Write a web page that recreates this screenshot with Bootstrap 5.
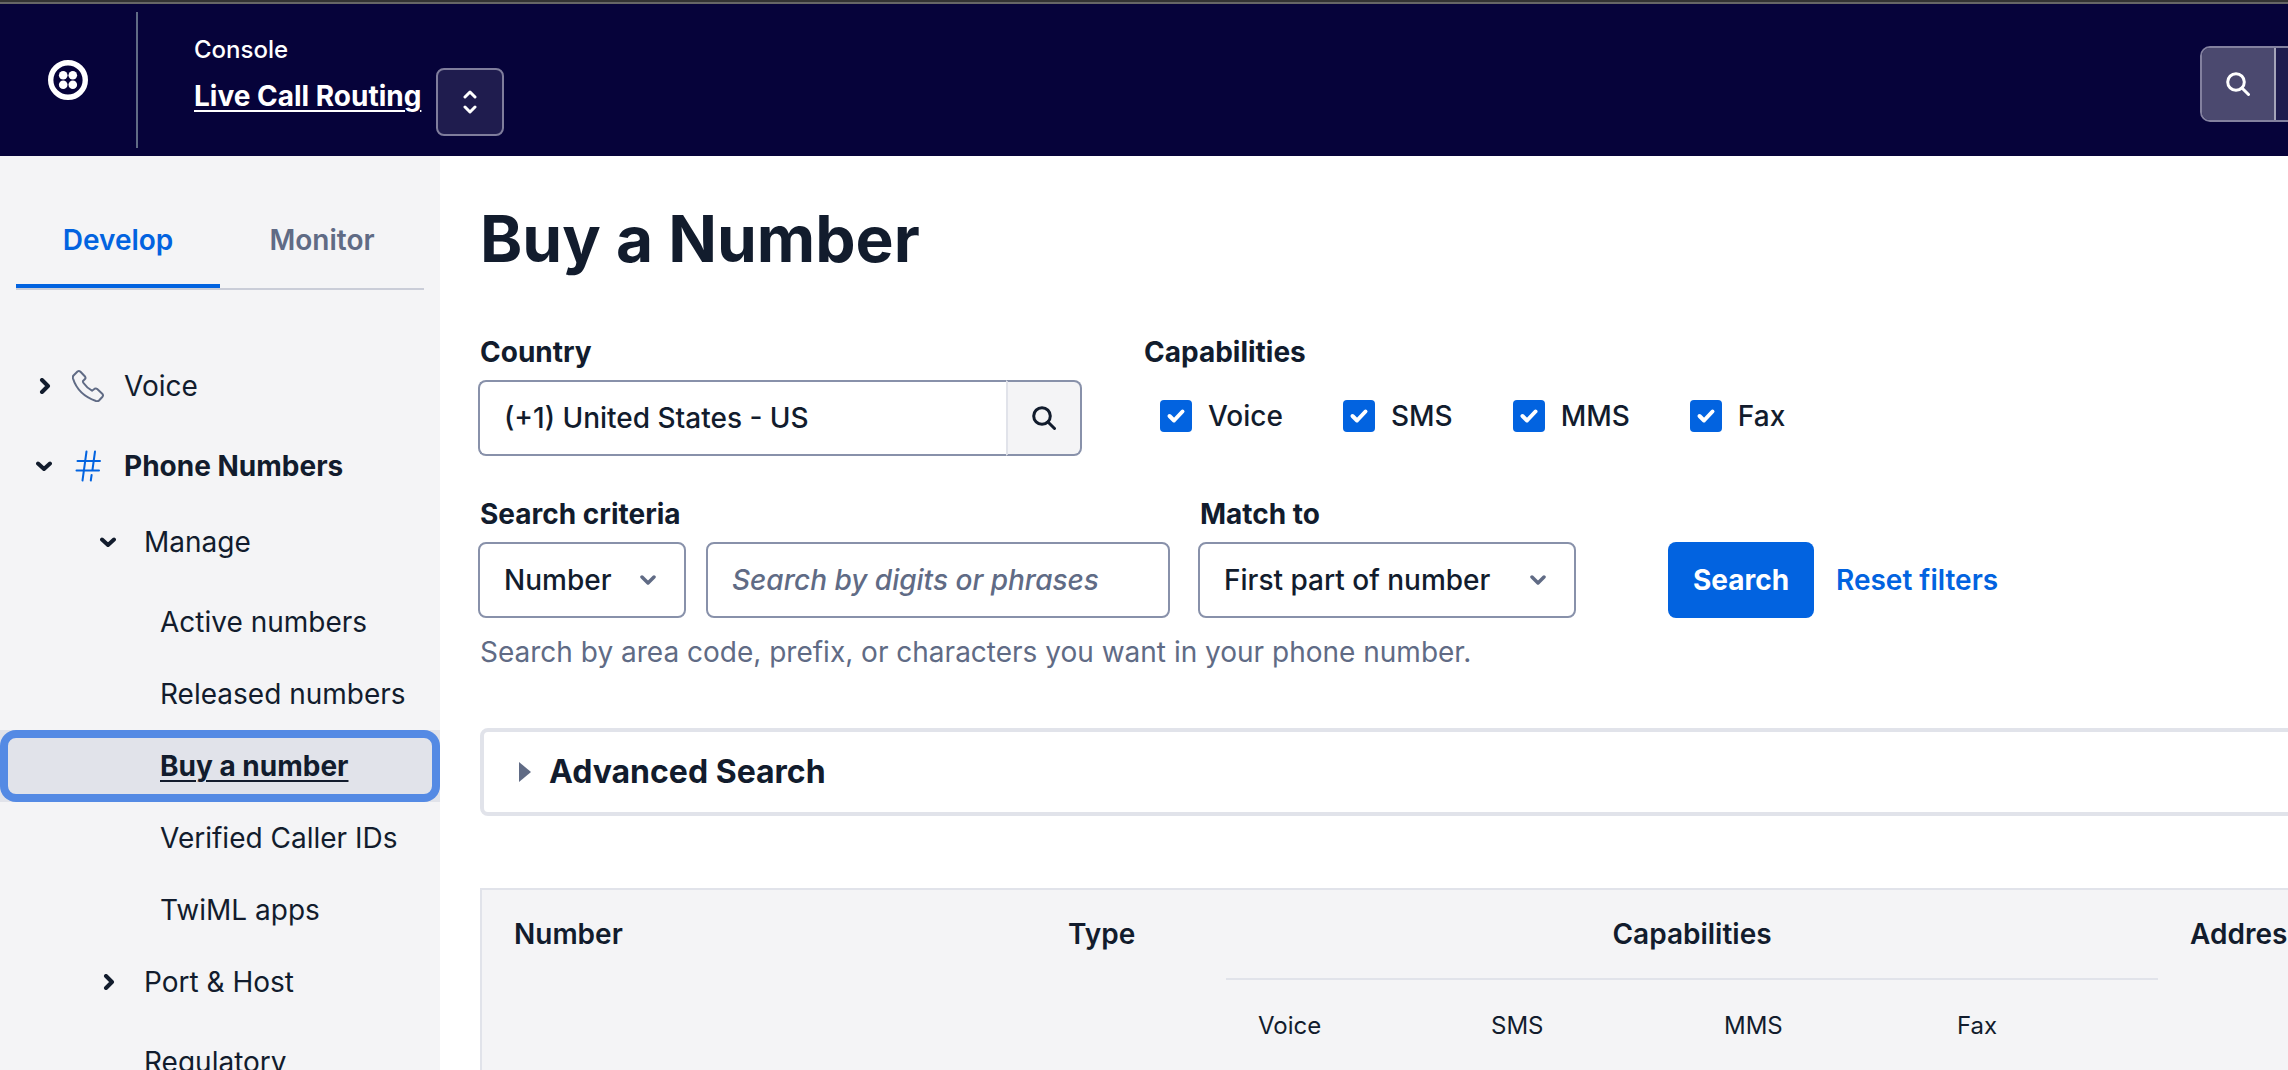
<!DOCTYPE html>
<html lang="en">
<head>
<meta charset="utf-8">
<meta name="viewport" content="width=device-width, initial-scale=1">
<title>Buy a Number</title>
<link href="https://cdn.jsdelivr.net/npm/bootstrap@5.3.0/dist/css/bootstrap.min.css" rel="stylesheet">
<style>
  :root { --ink: #121c2d; --muted: #606b85; --line: #e1e3ea; --field: #8891aa; --blue: #0263e0; --panel: #f4f4f6; --navy: #06033a; }
  body { font-family: Inter, "Liberation Sans", sans-serif; font-size: 28px; line-height: 40px; color: var(--ink); }
  svg { display: block; flex: none; }

  .topbar { background: var(--navy); border-top: 2px solid #666; height: 154px; }
  .top-edge { height: 2px; background: #333; }
  .brand-cell { width: 138px; border-right: 2px solid #606b85; margin: 8px 0; padding-left: 48px; }
  .account { padding: 30px 0 0 56px; }
  .console-label { font-size: 24px; line-height: 32px; font-weight: 500; margin-bottom: 10px; }
  .account-link { text-decoration-thickness: 2px; text-underline-offset: 4px; }
  .account-link:hover { color: #fff; }
  .switch-btn { width: 68px; height: 68px; border: 2px solid #7f7d9c; border-radius: 8px; background: #1f1c4e; margin: 64px 0 0 15px; padding: 0; }
  .top-search { flex: 0 0 480px; height: 76px; margin: 42px -392px 0 auto; border: 2px solid #83819f; border-radius: 10px; overflow: hidden; background: #1f1c4e; }
  .top-search button { flex: 0 0 74px; border: 0; border-right: 2px solid #a5a4b8; background: #4b496f; padding: 0 0 0 24px; }
  .top-search input { background: transparent; border: 0; }

  .side { flex: 0 0 440px; background: var(--panel); padding-top: 44px; }
  .side-tabs { margin: 0 16px 56px; border-bottom: 2px solid #cacdd8; }
  .side-tabs .nav-link { padding: 20px 0 24px; border-bottom: 4px solid transparent; border-radius: 0; font-weight: 600; color: var(--muted); }
  .side-tabs .nav-link.active { color: var(--blue); border-color: var(--blue); }
  .tree a { display: flex; align-items: center; color: var(--ink); text-decoration: none; padding: 16px 0; }
  .tree .top-item { padding: 20px 0 20px 36px; }
  .tree .mid-item { padding-left: 100px; }
  .tree .leaf { padding-left: 160px; }
  .tree .no-arrow { padding-left: 144px; }
  .top-item .item-icon { margin: 0 20px 0 20px; }
  .mid-item svg { margin-right: 28px; }
  .chosen { background: var(--line); }
  .chosen a { box-shadow: inset 0 0 0 8px #548ae4; border-radius: 16px; font-weight: 700; text-decoration: underline; text-decoration-thickness: 2px; text-underline-offset: 4px; }

  .work { padding: 43px 0 0 40px; }
  .work h1 { font-size: 64px; line-height: 80px; font-weight: 700; margin-bottom: 53px; }
  .field-title { display: block; float: none; font-size: 28px; line-height: 40px; font-weight: 700; margin: 0 0 8px; }
  label.field-title { padding-left: 2px; }
  .form-control, .form-select { height: 76px; font-size: 28px; line-height: 40px; font-weight: 500; color: var(--ink); border: 2px solid var(--field); border-radius: 8px; padding: 0 24px; background-color: #fff; }
  .form-control::placeholder { color: var(--muted); font-style: italic; opacity: 1; }
  .form-select { background-image: url("data:image/svg+xml,%3Csvg xmlns='http://www.w3.org/2000/svg' viewBox='0 0 16 10'%3E%3Cpath d='M2 2l6 6 6-6' fill='none' stroke='%23606b85' stroke-width='3.5' stroke-linecap='round' stroke-linejoin='round'/%3E%3C/svg%3E"); background-size: 16px 10px; background-position: right 28px center; }
  .form-row { margin-left: -2px; }
  .country { width: 604px; }
  .country .form-control { border-right: 0; }
  .country .btn { width: 76px; border: 2px solid var(--field); border-left: 2px solid var(--line); border-radius: 0 8px 8px 0; background: var(--panel); padding: 0 0 0 24px; }
  .capabilities { margin-left: 62px; }
  .checks { gap: 60px; padding-left: 16px; margin-top: 16px; }
  .checks .form-check-input { width: 32px; height: 32px; margin: 0 16px 0 0; border: 0; border-radius: 4px; }
  .checks .form-check-input:checked { background-color: var(--blue); background-size: 32px 32px; background-image: url("data:image/svg+xml,%3Csvg xmlns='http://www.w3.org/2000/svg' viewBox='0 0 32 32'%3E%3Cpath d='M9.500 16l4.500 4.500 8.500-9' fill='none' stroke='%23fff' stroke-width='4' stroke-linecap='round' stroke-linejoin='round'/%3E%3C/svg%3E"); }
  .checks label { font-weight: 500; }
  .criteria-row { margin-top: 38px; }
  .criteria { width: 208px; }
  .digits { width: 464px; margin-left: 20px; }
  .match-group { margin-left: 28px; }
  .match { width: 378px; }
  .search-btn { height: 76px; width: 146px; margin-left: 92px; background: var(--blue); border: 0; border-radius: 8px; font-size: 28px; font-weight: 700; padding: 0; }
  .reset-link { color: var(--blue); font-weight: 600; text-decoration: none; line-height: 76px; margin-left: 22px; }
  .hint { color: var(--muted); margin: 14px 0 56px; }
  .wide { width: calc(100% + 400px); }
  .advanced { border: 4px solid var(--line); border-radius: 8px; margin-bottom: 72px; }
  .advanced summary { display: flex; align-items: center; font-size: 32px; font-weight: 700; padding: 20px 35px; }
  .advanced summary svg { margin-right: 18px; }
  .results { table-layout: fixed; margin: 0; border: 2px solid var(--line); --bs-table-bg: #f4f4f6; --bs-table-color: #121c2d; }
  .results > thead > tr > th { border: 0; padding: 24px 32px; font-weight: 600; vertical-align: top; }
  .results > thead > tr > .group-head { border-bottom: 2px solid var(--line); text-align: center; }
  .results > thead > tr > .sub-head { font-size: 24px; font-weight: 400; padding-top: 26px; padding-bottom: 40px; }
</style>
</head>
<body class="vh-100 overflow-hidden d-flex flex-column">
<div class="top-edge flex-shrink-0"></div>
<header class="topbar d-flex flex-shrink-0 overflow-hidden text-white">
  <a href="#" class="brand-cell d-flex align-items-center" aria-label="Home">
    <svg width="40" height="40" viewBox="0 0 40 40" fill="#fff"><circle cx="20" cy="20" r="17.300" fill="none" stroke="#fff" stroke-width="5.400"/><circle cx="15.200" cy="15.200" r="4.300"/><circle cx="24.800" cy="15.200" r="4.300"/><circle cx="15.200" cy="24.800" r="4.300"/><circle cx="24.800" cy="24.800" r="4.300"/></svg>
  </a>
  <div class="d-flex align-items-start">
    <div class="account">
      <div class="console-label">Console</div>
      <a href="#" class="account-link d-block text-white fw-bold">Live Call Routing</a>
    </div>
    <button type="button" class="switch-btn d-flex align-items-center justify-content-center" aria-label="Switch account">
      <svg width="16" height="24" viewBox="0 0 16 24" fill="none" stroke="#fff" stroke-width="3" stroke-linecap="round" stroke-linejoin="round"><path d="M3 7l5-5 5 5M3 17l5 5 5-5"/></svg>
    </button>
  </div>
  <form class="top-search d-flex">
    <button type="button" aria-label="Search"><svg width="24" height="24" viewBox="0 0 24 24" fill="none" stroke="#fff" stroke-width="3" stroke-linecap="round"><circle cx="10" cy="10" r="8.300"/><path d="M16 16l6.500 6.500"/></svg></button>
    <input type="text" class="flex-grow-1" aria-label="Search the console">
  </form>
</header>

<div class="d-flex flex-grow-1 overflow-hidden">
  <aside class="side overflow-hidden">
    <nav class="side-tabs nav nav-justified">
      <a href="#" class="nav-link active">Develop</a>
      <a href="#" class="nav-link">Monitor</a>
    </nav>
    <ul class="tree list-unstyled mb-0">
      <li><a href="#" class="top-item">
        <svg width="16" height="16" viewBox="0 0 16 16" fill="none" stroke="#121c2d" stroke-width="4" stroke-linecap="round" stroke-linejoin="round"><path d="M6 2l6 6-6 6"/></svg>
        <svg class="item-icon" width="32" height="32" viewBox="0 0 32 32" fill="none" stroke="#606b85" stroke-width="2" stroke-linejoin="round"><path d="M1.500 5.500L5.500 1.500Q7 .5 8.500 1.800L13 6.500Q14 8 13 9L11 11Q10.700 12 11.500 13Q15 18 20 20.700L22.700 18.700Q24 18 25.200 19L30.500 24Q31.500 25.500 30.500 26.700L27 30.500Q26 31.500 24 31C11 26.500 4 18 1 8.500Q.5 6.500 1.500 5.500Z"/></svg>
        Voice</a></li>
      <li><a href="#" class="top-item fw-bold">
        <svg width="16" height="16" viewBox="0 0 16 16" fill="none" stroke="#121c2d" stroke-width="4" stroke-linecap="round" stroke-linejoin="round"><path d="M2 5.500l6 5.500 6-5.500"/></svg>
        <svg class="item-icon" width="32" height="32" viewBox="0 0 32 32" fill="none" stroke="#0263e0" stroke-width="2" stroke-linecap="round"><path d="M14.500 1.500l-4 29M23 1.500l-2.600 19M19.600 25l-.8 5.500M5.500 11h22.500M4.500 20.500h22.500"/></svg>
        Phone Numbers</a>
        <ul class="list-unstyled fw-normal">
          <li><a href="#" class="mid-item">
            <svg width="16" height="16" viewBox="0 0 16 16" fill="none" stroke="#121c2d" stroke-width="4" stroke-linecap="round" stroke-linejoin="round"><path d="M2 5.500l6 5.500 6-5.500"/></svg>
            Manage</a>
            <ul class="list-unstyled mt-2">
              <li><a href="#" class="leaf">Active numbers</a></li>
              <li><a href="#" class="leaf">Released numbers</a></li>
              <li class="chosen"><a href="#" class="leaf">Buy a number</a></li>
              <li><a href="#" class="leaf">Verified Caller IDs</a></li>
              <li><a href="#" class="leaf">TwiML apps</a></li>
            </ul>
          </li>
          <li><a href="#" class="mid-item">
            <svg width="16" height="16" viewBox="0 0 16 16" fill="none" stroke="#121c2d" stroke-width="4" stroke-linecap="round" stroke-linejoin="round"><path d="M6 2l6 6-6 6"/></svg>
            Port &amp; Host</a></li>
          <li class="mt-2"><a href="#" class="no-arrow">Regulatory</a></li>
        </ul>
      </li>
    </ul>
  </aside>

  <main class="work flex-grow-1 overflow-hidden">
    <h1>Buy a Number</h1>
    <form>
      <div class="form-row d-flex">
        <div>
          <label class="field-title" for="country">Country</label>
          <div class="country input-group">
            <input id="country" type="text" class="form-control" value="(+1) United States - US">
            <button type="button" class="btn" aria-label="Find country"><svg width="24" height="24" viewBox="0 0 24 24" fill="none" stroke="#121c2d" stroke-width="3" stroke-linecap="round"><circle cx="10" cy="10" r="8.300"/><path d="M16 16l6.500 6.500"/></svg></button>
          </div>
        </div>
        <fieldset class="capabilities">
          <legend class="field-title">Capabilities</legend>
          <div class="checks d-flex">
            <div class="d-flex align-items-center"><input id="c1" type="checkbox" class="form-check-input" checked><label for="c1">Voice</label></div>
            <div class="d-flex align-items-center"><input id="c2" type="checkbox" class="form-check-input" checked><label for="c2">SMS</label></div>
            <div class="d-flex align-items-center"><input id="c3" type="checkbox" class="form-check-input" checked><label for="c3">MMS</label></div>
            <div class="d-flex align-items-center"><input id="c4" type="checkbox" class="form-check-input" checked><label for="c4">Fax</label></div>
          </div>
        </fieldset>
      </div>
      <div class="criteria-row form-row d-flex align-items-end">
        <div>
          <label class="field-title" for="criteria">Search criteria</label>
          <div class="d-flex">
            <select id="criteria" class="criteria form-select"><option>Number</option></select>
            <input type="text" class="digits form-control" placeholder="Search by digits or phrases" aria-label="Digits or phrases">
          </div>
        </div>
        <div class="match-group">
          <label class="field-title" for="match">Match to</label>
          <select id="match" class="match form-select"><option>First part of number</option></select>
        </div>
        <button type="button" class="search-btn btn btn-primary">Search</button>
        <a href="#" class="reset-link">Reset filters</a>
      </div>
    </form>
    <p class="hint">Search by area code, prefix, or characters you want in your phone number.</p>

    <div class="wide">
      <details class="advanced">
        <summary><svg width="12" height="20" viewBox="0 0 12 20" fill="#606b85"><path d="M0 0l12 10L0 20z"/></svg>Advanced Search</summary>
      </details>
      <table class="results table">
        <colgroup><col style="width:555px"><col style="width:190px"><col style="width:233px"><col style="width:233px"><col style="width:233px"><col style="width:233px"><col></colgroup>
        <thead>
          <tr><th rowspan="2">Number</th><th rowspan="2">Type</th><th colspan="4" class="group-head">Capabilities</th><th rowspan="2">Address</th></tr>
          <tr><th class="sub-head">Voice</th><th class="sub-head">SMS</th><th class="sub-head">MMS</th><th class="sub-head">Fax</th></tr>
        </thead>
      </table>
    </div>
  </main>
</div>
<script src="https://cdn.jsdelivr.net/npm/bootstrap@5.3.0/dist/js/bootstrap.bundle.min.js"></script>
</body>
</html>
